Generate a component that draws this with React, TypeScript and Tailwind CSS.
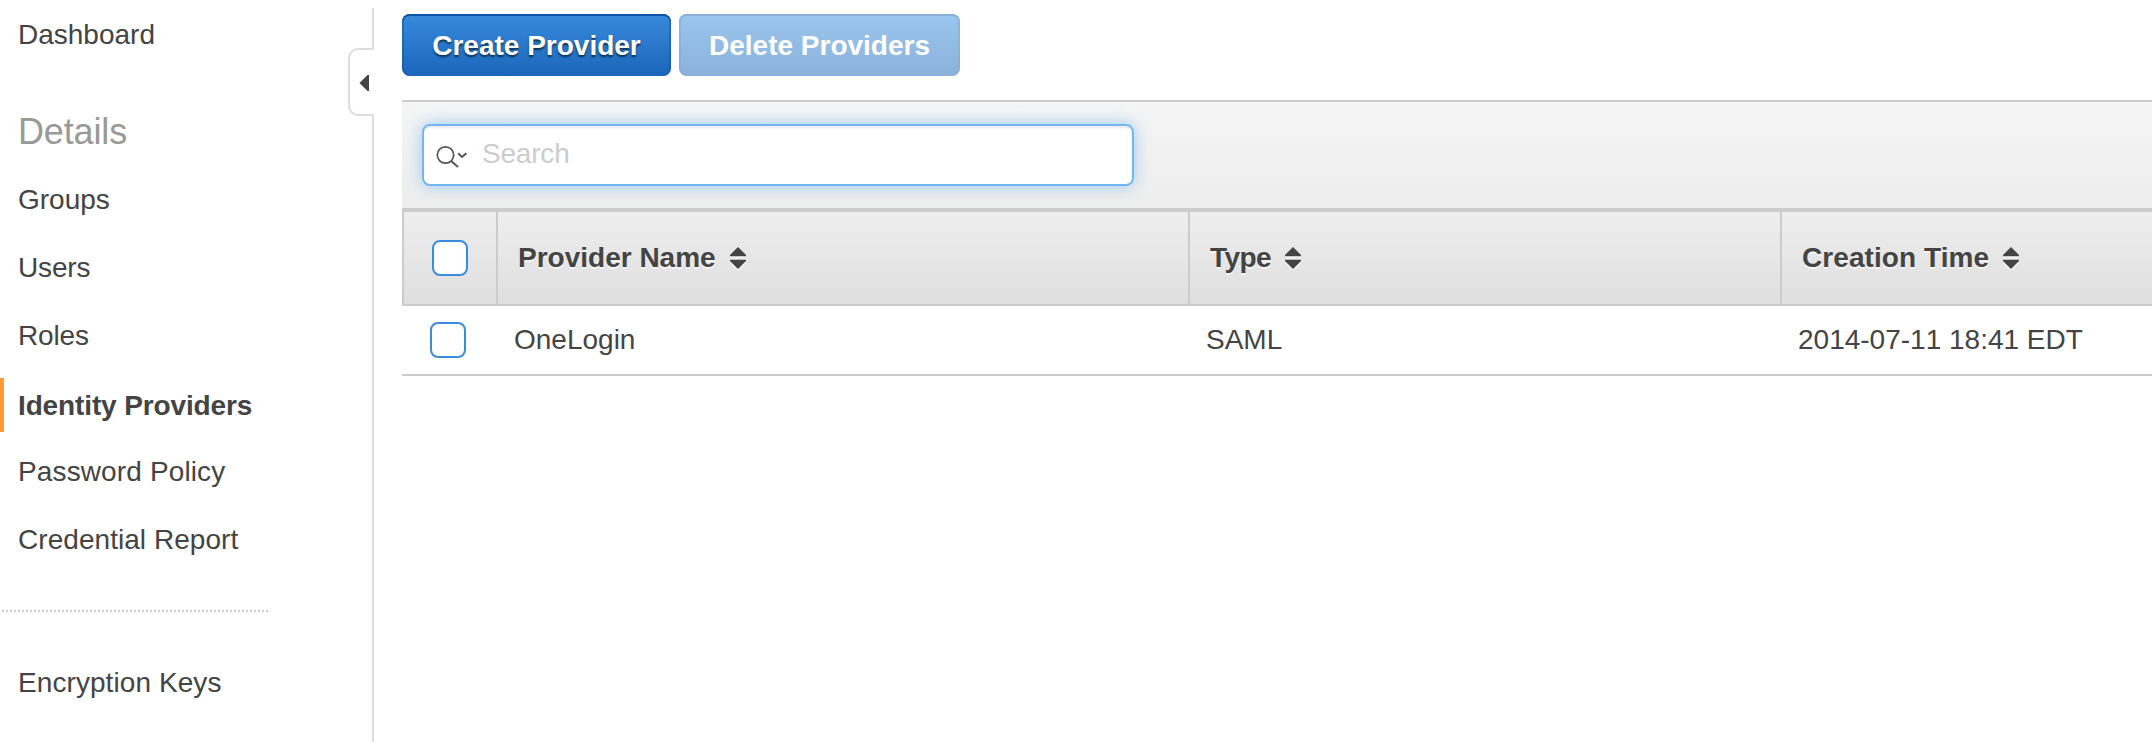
import React from "react";

function NavItem({ label, className = "" }: { label: string; className?: string }) {
  return (
    <a className={`block h-[54px] border-l-4 border-transparent pl-3.5 leading-[56px] ${className}`}>{label}</a>
  );
}

function SortIcon() {
  return (
    <svg
      width="16"
      height="22"
      viewBox="0 0 16 22"
      className="ml-3.5 shrink-0 drop-shadow-[0_2px_0_rgba(255,255,255,0.6)]"
      fill="#444444"
    >
      <path d="M8 0 L16 8 V9.3 H0 V8 Z" />
      <path d="M0 12.7 H16 V14 L8 22 L0 14 Z" />
    </svg>
  );
}

function HeaderCell({ label, className = "" }: { label: string; className?: string }) {
  return (
    <div
      className={`flex items-center border-l-2 border-[#cccccc] pl-5 font-bold [text-shadow:0_2px_0_rgba(255,255,255,0.6)] ${className}`}
    >
      <span>{label}</span>
      <SortIcon />
    </div>
  );
}

function Checkbox() {
  return <span className="block size-9 rounded-lg border-2 border-[#3a8ddd] bg-white" />;
}

function SearchIcon() {
  return (
    <svg width="32" height="24" viewBox="0 0 32 24" fill="none" stroke="#555555" strokeWidth="1.7" className="mt-[3px]">
      <circle cx="9.5" cy="10" r="8.2" />
      <path d="M14.8 15.7 L22 22" strokeWidth="2" />
      <path d="M22.2 8.2 L26 12 L30.4 8.2" strokeWidth="2" />
    </svg>
  );
}

function Sidebar() {
  return (
    <aside className="flex w-[402px] shrink-0">
      <nav className="w-[348px] pt-[7px]">
        <NavItem label="Dashboard" />
        <h2 className="mt-[43px] h-[54px] pl-[18px] text-4xl leading-[56px] tracking-[-0.15px] text-[#999999]">Details</h2>
        <NavItem label="Groups" className="mt-[14px]" />
        <NavItem label="Users" className="mt-[14px] tracking-[-0.15px]" />
        <NavItem label="Roles" className="mt-[14px] tracking-[-0.15px]" />
        <NavItem label="Identity Providers" className="mt-4 border-[#ff9933]! font-bold tracking-[-0.13px]" />
        <NavItem label="Password Policy" className="mt-3 tracking-[0.13px]" />
        <NavItem label="Credential Report" className="mt-[14px] tracking-[0.05px]" />
        <div className="ml-0.5 mt-11 h-0.5 w-[266px] bg-[repeating-linear-gradient(90deg,#cccccc_0_2px,transparent_2px_4px)]" />
        <NavItem label="Encryption Keys" className="mt-[43px] tracking-[0.08px]" />
      </nav>
      <div className="flex w-[26px] flex-col items-end pt-2">
        <div className="h-10 w-0.5 bg-[#dddddd]" />
        <button className="flex h-[68px] w-[26px] items-center rounded-l-[10px] border-y-2 border-l-2 border-[#dddddd] pl-[9px] pt-0.5">
          <svg width="10" height="18" viewBox="0 0 10 18" fill="#444444">
            <path d="M0.5 9 L8.5 1 H10 V17 H8.5 Z" />
          </svg>
        </button>
        <div className="w-0.5 flex-1 bg-[#dddddd]" />
      </div>
    </aside>
  );
}

export default function App() {
  return (
    <div className="flex h-[742px] w-[2152px] overflow-hidden bg-white font-['Liberation_Sans',Arial,sans-serif] text-[28px] text-[#444444]">
      <Sidebar />
      <main className="min-w-0 flex-1 pt-3.5">
        <div className="flex h-[62px] gap-2 font-bold text-white">
          <button className="w-[269px] rounded-lg bg-linear-to-b from-[#388add] to-[#1a66ba] pt-0.5 whitespace-nowrap shadow-[inset_0_2px_0_#0b55a5,inset_2px_0_0_rgba(11,85,165,0.5),inset_-2px_0_0_rgba(11,85,165,0.5)] [text-shadow:0_2px_2px_rgba(0,0,0,0.6)]">
            Create Provider
          </button>
          <button className="w-[281px] rounded-lg bg-linear-to-b from-[#9bc6ee] to-[#8bb1db] pt-0.5 whitespace-nowrap shadow-[inset_0_2px_0_#88b0da,inset_2px_0_0_rgba(125,165,210,0.4),inset_-2px_0_0_rgba(125,165,210,0.4)]">
            Delete Providers
          </button>
        </div>
        <div className="mt-6 h-[108px] border-t-2 border-[#cccccc] bg-linear-to-b from-[#f5f5f5] to-[#ededed] pl-5 pt-[22px]">
          <div className="flex h-[62px] w-[712px] items-center rounded-lg border-2 border-[#74b7f0] bg-white pl-3 shadow-[0_0_16px_rgba(116,183,240,0.7),inset_0_2px_2px_rgba(0,0,0,0.08)]">
            <SearchIcon />
            <span className="ml-3.5 pb-0.5 tracking-[-0.2px] text-[#cccccc]">Search</span>
          </div>
        </div>
        <div className="grid h-[98px] grid-cols-[94px_692px_592px_1fr] border-b-2 border-t-4 border-[#cccccc] bg-linear-to-b from-[#eeeeee] to-[#dfdfdf]">
          <div className="flex items-center border-l-2 border-[#cccccc] pl-7">
            <Checkbox />
          </div>
          <HeaderCell label="Provider Name" />
          <HeaderCell label="Type" className="tracking-[-0.6px]" />
          <HeaderCell label="Creation Time" className="tracking-[0.08px]" />
        </div>
        <div className="grid h-[70px] grid-cols-[94px_692px_592px_1fr] items-center border-b-2 border-[#cccccc]">
          <div className="pl-7">
            <Checkbox />
          </div>
          <div className="pl-[18px]">OneLogin</div>
          <div className="pl-[18px]">SAML</div>
          <div className="pl-[18px] [font-kerning:none]">2014-07-11 18:41 EDT</div>
        </div>
      </main>
    </div>
  );
}
